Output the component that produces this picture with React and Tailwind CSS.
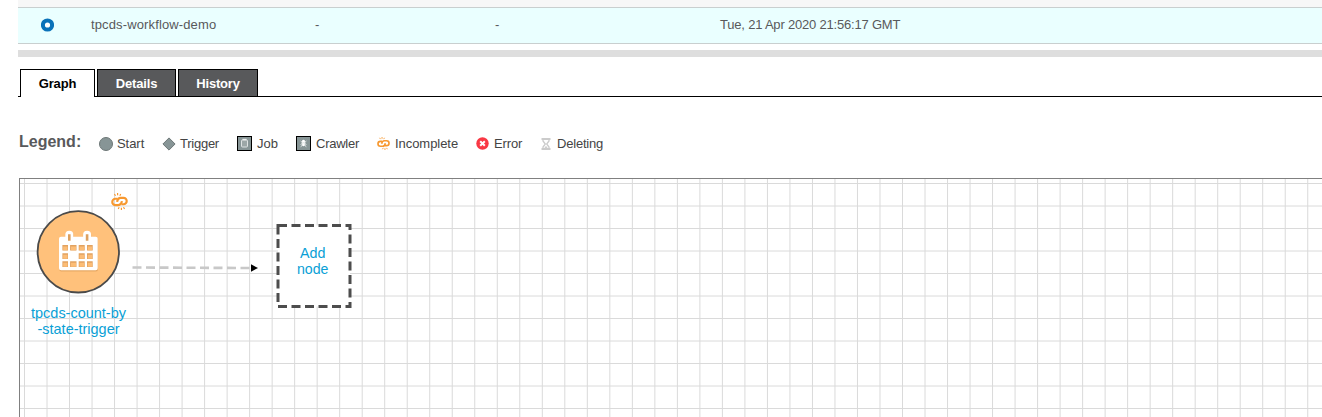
import React from "react";

const BrokenLink = ({ className }) => (
  <svg className={className} viewBox="0 0 16 16" fill="none" stroke="#f7982f">
    <path d="M10.300 7.700C9.800 10.400 8.700 11.400 7 11.400H4.200a3 3 0 0 1 0-6H6.200" strokeWidth="2" />
    <path d="M5.700 8.300c.5-2.700 1.600-3.700 3.300-3.700h2.800a3 3 0 0 1 0 6H9.800" strokeWidth="2" />
    <path d="M3.200 1l1.100 1.600M6.200 0v2.200M9.200 1l-.9 1.600M12.800 15l-1.100-1.600M9.800 16v-2.200M6.800 15l.9-1.600" strokeWidth="1.100" />
  </svg>
);

const icons = {
  start: (
    <svg className="h-[14px] w-[14px]" viewBox="0 0 14 14">
      <circle cx="7" cy="7" r="6.500" fill="#879596" stroke="#6d7777" />
    </svg>
  ),
  trigger: (
    <svg className="h-[14px] w-[14px]" viewBox="0 0 14 14">
      <path d="M7 .9 13.100 7 7 13.100 .9 7z" fill="#879596" stroke="#6d7777" />
    </svg>
  ),
  job: (
    <svg className="h-[15px] w-[15px]" viewBox="0 0 15 15">
      <rect x=".5" y=".5" width="14" height="14" fill="#879596" stroke="#000" />
      <rect x="4.500" y="4" width="6" height="7" rx="1" fill="#9ca7a7" stroke="#dde2e2" />
      <path d="M5.500 3.500h4" stroke="#eef0f0" strokeWidth="1.400" />
    </svg>
  ),
  crawler: (
    <svg className="h-[15px] w-[15px]" viewBox="0 0 15 15">
      <rect x=".5" y=".5" width="14" height="14" fill="#879596" stroke="#000" />
      <ellipse cx="7.500" cy="7" rx="1.800" ry="3.200" fill="#fff" />
      <path d="M4.500 5 10.500 8.500M10.500 5 4.500 8.500M4.800 11.200l1.700-3M10.200 11.200 8.500 8" stroke="#dfe4e4" strokeWidth=".8" />
    </svg>
  ),
  incomplete: <BrokenLink className="h-[13px] w-[13px]" />,
  error: (
    <svg className="h-[13px] w-[13px]" viewBox="0 0 13 13">
      <circle cx="6.500" cy="6.500" r="6.200" fill="#f93844" />
      <path d="M4.200 4.200l4.600 4.600M8.800 4.200 4.200 8.800" stroke="#fff" strokeWidth="2" />
    </svg>
  ),
  deleting: (
    <svg className="h-[12px] w-[10px]" viewBox="0 0 10 12" fill="none" stroke="#cbcbcb">
      <path d="M.5 1h9M.5 11h9" strokeWidth="2" />
      <path d="M2 1v2L4.300 6 2 9v2M8 1v2L5.700 6 8 9v2" strokeWidth="1.300" />
      <path d="M3.500 10.500 5 8.500l1.500 2z" fill="#cbcbcb" />
    </svg>
  ),
};

const legend = [
  { icon: "start", label: "Start", w: "w-[63px]", gap: "gap-[4px]", track: "tracking-[-0.05px]" },
  { icon: "trigger", label: "Trigger", w: "w-[75px]", gap: "gap-[4px]", track: "tracking-[-0.25px]" },
  { icon: "job", label: "Job", w: "w-[59px]", gap: "gap-[5px]", track: "tracking-[0px]" },
  { icon: "crawler", label: "Crawler", w: "w-[81px]", gap: "gap-[5px]", track: "tracking-[-0.25px]" },
  { icon: "incomplete", label: "Incomplete", w: "w-[99px]", gap: "gap-[5px]", track: "tracking-[-0.05px]" },
  { icon: "error", label: "Error", w: "w-[65px]", gap: "gap-[5px]", track: "tracking-[-0.15px]" },
  { icon: "deleting", label: "Deleting", w: "w-[70px]", gap: "gap-[6px]", track: "tracking-[-0.2px]" },
];

function Tabs() {
  return (
    <div className="ml-[18px] mt-[12px] flex h-[28px] shrink-0 items-end gap-[2px] border-b border-black pl-[2px] text-[13px] font-bold leading-[28px]">
      <div className="-mb-px h-[28px] w-[75px] border-x border-t border-black bg-white text-center tracking-[-0.2px] text-black">Graph</div>
      <div className="h-[27px] w-[79px] border-x border-t border-black bg-[#58595b] text-center tracking-[-0.15px] text-white">Details</div>
      <div className="h-[27px] w-[80px] border-x border-t border-black bg-[#58595b] text-center tracking-[-0.2px] text-white">History</div>
    </div>
  );
}

const calendarCells =
  "M42.400 66h5.600v5.600h-5.600zM50.100 66h6.400v5.600h-6.400zM58.700 66h6v5.600h-6zM67 66h5.700v5.600H67z" +
  "M42.400 74.300h5.600V80h-5.600zM58.700 74.300h6V80h-6zM67 74.300h5.700V80H67z" +
  "M42.400 82.300h5.600V88h-5.600zM50.100 82.300h6.400V88h-6.400zM58.700 82.300h6V88h-6zM67 82.300h5.700V88H67z";

const calendarBody =
  "M41 57.800h4.300V55.800a4 4 0 0 1 8 0v2h9.800v-2a4 4 0 0 1 8 0v2H75.700a2 2 0 0 1 2 2V89.300a2 2 0 0 1-2 2H41a2 2 0 0 1-2-2V59.800a2 2 0 0 1 2-2z";

function Canvas() {
  const cols = Array.from({ length: 58 }, (_, i) => 4.5 + i * 22.513);
  const rows = Array.from({ length: 11 }, (_, i) => 4.5 + i * 22.5);
  return (
    <div className="ml-[19px] mt-[22px] h-[239px] shrink-0 overflow-hidden border-l border-t border-[#808080]">
      <svg width="1302" height="238" className="block" fontFamily="'Liberation Sans', sans-serif">
        <g stroke="#dadada">
          {cols.map((x) => <path key={x} d={`M${x} 0V238`} />)}
          {rows.map((y) => <path key={y} d={`M0 ${y}H1302`} />)}
        </g>
        <circle cx="58.300" cy="72.800" r="40.700" fill="#ffc17b" stroke="#4a4a4a" strokeWidth="1.800" />
        <path d={calendarBody} fill="#c98a48" opacity=".45" transform="translate(0.3 1.200)" />
        <path d={calendarBody} fill="#fff" />
        <path d={calendarCells} fill="#e2a260" />
        <g fill="#fcbd77">
          <path d="M43.200 67.500h4.300v3.800h-4.300zM51 67.500h5v3.800h-5zM59.500 67.500h4.700v3.800h-4.700zM67.800 67.500h4.400v3.800h-4.400z" />
          <path d="M43.200 75.800h4.300v3.900h-4.300zM59.500 75.800h4.700v3.900h-4.700zM67.800 75.800h4.400v3.900h-4.400z" />
          <path d="M43.200 83.800h4.300v3.900h-4.300zM51 83.800h5v3.900h-5zM59.500 83.800h4.700v3.900h-4.700zM67.800 83.800h4.400v3.900h-4.400z" />
        </g>
        <path d="M48 55.300h2.600v6.400H48zM65.800 55.300h2.600v6.400h-2.600z" fill="#dda05f" />
        <svg x="91" y="14" width="17" height="17"><BrokenLink className="h-[17px] w-[17px]" /></svg>
        <path d="M112.500 88.500 230 89" stroke="#c8c8c8" strokeWidth="2.600" strokeDasharray="9 4.500" />
        <path d="M231 85.300v7.400l7-3.700z" fill="#000" />
        <rect x="258" y="46.500" width="72" height="81" fill="#fff" stroke="#4d4d4d" strokeWidth="3" strokeDasharray="9 4.500" />
        <g fill="#0a9fd6" fontSize="15">
          <text x="11" y="139" textLength="95" lengthAdjust="spacingAndGlyphs">tpcds-count-by</text>
          <text x="17.500" y="155" textLength="82" lengthAdjust="spacingAndGlyphs">-state-trigger</text>
          <text x="280" y="79" textLength="25.500" lengthAdjust="spacingAndGlyphs">Add</text>
          <text x="277" y="95" textLength="31.500" lengthAdjust="spacingAndGlyphs">node</text>
        </g>
      </svg>
    </div>
  );
}

export default function App() {
  return (
    <div className="flex h-[417px] w-[1322px] flex-col overflow-hidden bg-white font-['Liberation_Sans',sans-serif]">
      <div className="ml-[18px] h-[7px] shrink-0 bg-[#f7f7f7]" />
      <div className="ml-[18px] flex h-[37px] shrink-0 items-center border-y border-[#c9cfcf] bg-[#eaffff] pb-[2px] text-[13px] text-[#58595b]">
        <div className="w-[73px] pl-[23px]">
          <svg width="13" height="14" viewBox="0 0 13 14">
            <circle cx="6.500" cy="7" r="4.600" fill="#fff" stroke="#0a72b9" strokeWidth="4" />
          </svg>
        </div>
        <div className="w-[224px] tracking-[0.13px]">tpcds-workflow-demo</div>
        <div className="w-[180px]">-</div>
        <div className="w-[225px]">-</div>
        <div className="tracking-[-0.2px]">Tue, 21 Apr 2020 21:56:17 GMT</div>
      </div>
      <div className="ml-[18px] mt-[6px] h-[7px] shrink-0 bg-[#dedede]" />
      <Tabs />
      <div className="ml-[19px] mt-[34px] flex h-[25px] shrink-0 items-center text-[13px] text-[#444]">
        <div className="w-[80px] pb-[4px] text-[16px] font-bold text-[#58595b]">Legend:</div>
        {legend.map((item) => (
          <div key={item.icon} className={`flex items-center ${item.w} ${item.gap}`}>
            {icons[item.icon]}
            <span className={item.track}>{item.label}</span>
          </div>
        ))}
      </div>
      <Canvas />
    </div>
  );
}
